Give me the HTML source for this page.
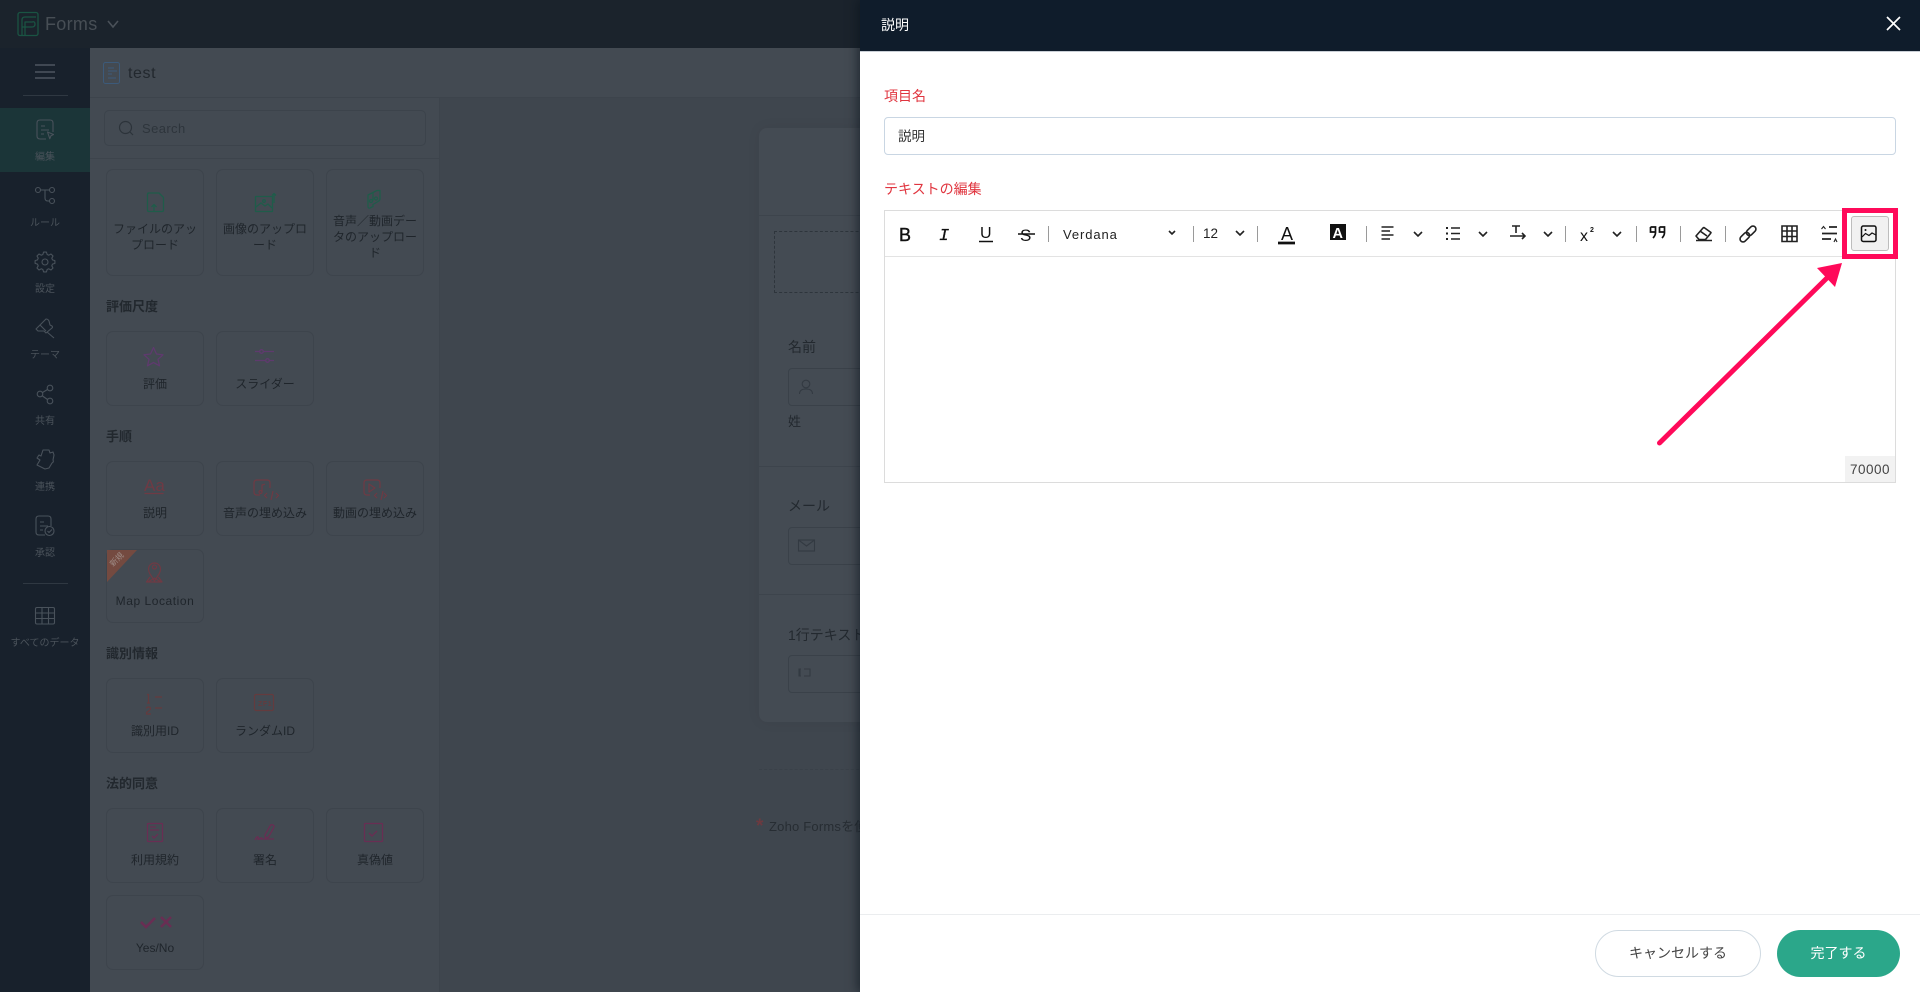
<!DOCTYPE html>
<html lang="ja"><head><meta charset="utf-8"><title>Zoho Forms</title>
<style>
*{box-sizing:border-box}
html,body{margin:0;padding:0;width:1920px;height:992px;overflow:hidden;background:#3f464e;font-family:"Liberation Sans","Noto Sans CJK JP",sans-serif}
.a{position:absolute}
.c{position:absolute;border:1px solid #3d444c;border-radius:7px;width:98px;background:#434a52}
.l{position:absolute;width:98px;text-align:center;font-size:12px;line-height:16px;color:#1f252b;white-space:nowrap}
.s{position:absolute;left:106px;font-size:13px;font-weight:700;color:#22282e;line-height:18px}
.n{position:absolute;left:0;width:90px;text-align:center;font-size:10px;line-height:14px;color:#4b535b;white-space:nowrap}
.f{position:absolute;font-size:14px;color:#23292f;line-height:18px;white-space:nowrap}
.b{position:absolute;border:1px solid #3a4149;border-radius:4px;height:38px;width:120px}
.sep{position:absolute;top:226px;width:1px;height:16px;background:#9a9a9a}
</style></head><body>

<!-- background app -->
<div class="a" style="left:0;top:0;width:860px;height:48px;background:#1b232c"></div>
<div class="a" style="left:0;top:48px;width:90px;height:944px;background:#18212c"></div>
<div class="a" style="left:0;top:108px;width:90px;height:64px;background:#1b3538"></div>
<div class="a" style="left:90px;top:48px;width:770px;height:50px;background:#434a52;border-bottom:1px solid #3d444c"></div>
<div class="a" style="left:90px;top:98px;width:350px;height:894px;background:#434a52;border-right:1px solid #3d444c"></div>
<div class="a" style="left:90px;top:98px;width:350px;height:61px;border-bottom:1px solid #3d444c"></div>
<div class="a" style="left:104px;top:110px;width:322px;height:36px;border:1px solid #3c434b;border-radius:5px"></div>
<div class="a" style="left:142px;top:120px;font-size:13px;line-height:18px;color:#2e353c;letter-spacing:.4px">Search</div>
<div class="a" style="left:45px;top:12px;font-size:18px;line-height:24px;color:#474e55;letter-spacing:.3px">Forms</div>
<div class="a" style="left:128px;top:63px;font-size:16px;line-height:22px;color:#22282e;letter-spacing:.6px">test</div>

<!-- sidebar labels -->
<div class="n" style="top:151px">編集</div>
<div class="n" style="top:217px">ルール</div>
<div class="n" style="top:283px">設定</div>
<div class="n" style="top:349px">テーマ</div>
<div class="n" style="top:415px">共有</div>
<div class="n" style="top:481px">連携</div>
<div class="n" style="top:547px">承認</div>
<div class="n" style="top:637px">すべてのデータ</div>
<div class="a" style="left:23px;top:95px;width:45px;height:1px;background:#2f3842"></div>
<div class="a" style="left:23px;top:583px;width:45px;height:1px;background:#2f3842"></div>

<!-- field cards -->
<div class="c" style="left:106px;top:169px;height:107px"></div>
<div class="c" style="left:216px;top:169px;height:107px"></div>
<div class="c" style="left:326px;top:169px;height:107px"></div>
<div class="l" style="left:106px;top:221px">ファイルのアッ<br>プロード</div>
<div class="l" style="left:216px;top:221px">画像のアップロ<br>ード</div>
<div class="l" style="left:326px;top:213px">音声／動画デー<br>タのアップロー<br>ド</div>
<div class="s" style="top:298px">評価尺度</div>
<div class="c" style="left:106px;top:331px;height:75px"></div>
<div class="c" style="left:216px;top:331px;height:75px"></div>
<div class="l" style="left:106px;top:376px">評価</div>
<div class="l" style="left:216px;top:376px">スライダー</div>
<div class="s" style="top:428px">手順</div>
<div class="c" style="left:106px;top:461px;height:75px"></div>
<div class="c" style="left:216px;top:461px;height:75px"></div>
<div class="c" style="left:326px;top:461px;height:75px"></div>
<div class="l" style="left:106px;top:505px">説明</div>
<div class="l" style="left:216px;top:505px">音声の埋め込み</div>
<div class="l" style="left:326px;top:505px">動画の埋め込み</div>
<div class="c" style="left:106px;top:549px;height:74px"></div>
<div class="l" style="left:106px;top:593px;letter-spacing:.55px">Map Location</div>
<div class="s" style="top:645px">識別情報</div>
<div class="c" style="left:106px;top:678px;height:75px"></div>
<div class="c" style="left:216px;top:678px;height:75px"></div>
<div class="l" style="left:106px;top:723px">識別用ID</div>
<div class="l" style="left:216px;top:723px">ランダムID</div>
<div class="s" style="top:775px">法的同意</div>
<div class="c" style="left:106px;top:808px;height:75px"></div>
<div class="c" style="left:216px;top:808px;height:75px"></div>
<div class="c" style="left:326px;top:808px;height:75px"></div>
<div class="l" style="left:106px;top:852px">利用規約</div>
<div class="l" style="left:216px;top:852px">署名</div>
<div class="l" style="left:326px;top:852px">真偽値</div>
<div class="c" style="left:106px;top:895px;height:75px"></div>
<div class="l" style="left:106px;top:940px">Yes/No</div>

<!-- form preview -->
<div class="a" style="left:759px;top:128px;width:140px;height:594px;background:#444b53;border-radius:8px;box-shadow:0 0 14px rgba(0,0,0,.06)"></div>
<div class="a" style="left:759px;top:215px;width:110px;height:1px;background:#3d444c"></div>
<div class="a" style="left:774px;top:231px;width:110px;height:62px;border:1px dashed #2e353c"></div>
<div class="f" style="left:788px;top:338px;font-size:14px">名前</div>
<div class="b" style="left:788px;top:368px"></div>
<div class="f" style="left:788px;top:413px;font-size:13px">姓</div>
<div class="a" style="left:759px;top:466px;width:110px;height:1px;background:#3d444c"></div>
<div class="f" style="left:788px;top:497px">メール</div>
<div class="b" style="left:788px;top:527px"></div>
<div class="a" style="left:759px;top:594px;width:110px;height:1px;background:#3d444c"></div>
<div class="f" style="left:788px;top:626px">1行テキスト</div>
<div class="b" style="left:788px;top:655px"></div>
<div class="a" style="left:759px;top:769px;width:110px;border-top:1px dashed #3a4149"></div>
<div class="a" style="left:756px;top:817px;font-size:19px;font-weight:700;line-height:20px;color:#6c3a40">*</div>
<div class="f" style="left:769px;top:818px;font-size:13px;letter-spacing:.2px;color:#272d33">Zoho Formsを使</div>

<!-- background icons -->
<svg class="a" style="left:0;top:0" width="860" height="992" viewBox="0 0 860 992" fill="none">
<!-- logo -->
<g stroke="#1a5443" stroke-width="1.300" stroke-linejoin="round"><rect x="18" y="12.500" width="20" height="23" rx="2"/><path d="M22 35V20q0-3 3-3h11M22 27h10q3 0 3-3t-3-2h-7v13"/></g>
<path d="M108 21l5 6 5-6" stroke="#4a5159" stroke-width="1.600"/>
<!-- hamburger -->
<path d="M35 65h20M35 72h20M35 78h20" stroke="#4d5660" stroke-width="1.600"/>
<g stroke="#49525b" stroke-width="1.100" stroke-linejoin="round">
<!-- edit -->
<path d="M46 139h-6q-3-.2-3-3v-13q0-3 3-3h10q3 0 3 3v9M41 126h4M41 130h8M41 134h3"/><path d="M47.500 132l6 2.500-2.500 1.200-1.200 3z"/>
<!-- rules -->
<circle cx="38" cy="190" r="2.500"/><circle cx="52" cy="190" r="2.500"/><circle cx="52" cy="201" r="2.500"/><path d="M40.500 190h9M45 190v8q0 3 3 3h1.500"/>
<!-- settings -->
<circle cx="45" cy="262" r="3"/>
<path d="M42.850 254.500L43.600 252.100L46.400 252.100L47.150 254.500L48.800 255.200L51 254L53 256L51.800 258.200L52.500 259.850L54.900 260.600L54.900 263.400L52.500 264.150L51.800 265.800L53 268L51 270L48.800 268.800L47.150 269.500L46.400 271.900L43.600 271.900L42.850 269.500L41.200 268.800L39 270L37 268L38.200 265.800L37.500 264.150L35.100 263.400L35.100 260.600L37.500 259.850L38.200 258.200L37 256L39 254L41.200 255.200Z"/>
<!-- theme -->
<path d="M36 329l10-10q2 0 3 2l1 4 2 1q1 1 0 2l-6 5-2-2-6 0zM40 325l6 6M47 332l7 6"/>
<!-- share -->
<circle cx="40" cy="394" r="2.800"/><circle cx="50" cy="388" r="2.800"/><circle cx="50" cy="401" r="2.800"/><path d="M42.500 392.500l5-3M42.500 396l5 3.500"/>
<!-- integrate -->
<path d="M43 450l6 0 1 3 3-1 1 3-1 5q1 2-1 3l-3 5-4 1-8-4 3-5-3-2 2-3 2 1 1-3z"/>
<!-- approve -->
<path d="M45 535h-6q-3 0-3-3v-13q0-3 3-3h9q3 0 3 3v7M40 522h4M40 526h8M40 530h3"/><circle cx="49.500" cy="531" r="4.500"/><path d="M47.500 531l1.500 1.500 3-3"/>
<!-- all data -->
<rect x="35.500" y="607.500" width="19" height="16.500" rx="1.500"/><path d="M35.500 613h19M35.500 618.500h19M42 607.500v16.500M48.500 607.500v16.500"/>
</g>
<!-- header doc -->
<g stroke="#3c5a7a" stroke-width="1"><rect x="103.500" y="62.500" width="16" height="21" rx="2"/><path d="M108 68h6M108 71h9M108 74h4M108 78h8"/></g>
<!-- search -->
<circle cx="125.500" cy="127.500" r="6" stroke="#2c333a" stroke-width="1.200"/><path d="M130 132l3 3" stroke="#2c333a" stroke-width="1.200"/>
<!-- green -->
<g stroke="#1f5c4a" stroke-width="1.300" stroke-linejoin="round">
<path d="M148 193h11l1.500 1.500 3 3v12.500q0 1.500-1.500 1.500h-13q-1.500 0-1.500-1.500v-15.500q0-1.500 1.500-1.500z"/><path d="M154 211v-6M151.500 207l2.500-2.500 2.500 2.500"/>
<rect x="255.500" y="196.500" width="17" height="15"/><path d="M256 207l5-4 4 3 3-2 4 4"/><circle cx="264" cy="201" r="1.300"/><path d="M274 203v-9M272 195.500l2-2 2 2"/>
<path d="M368 203v-8l5-2.500 4-2 3 0v8q0 2-2 3l-5 3v2l-3 1.500q-2 .5-2-1.500zM373 192.500v8"/><circle cx="376" cy="198.500" r="1.500"/><circle cx="371" cy="201" r="1.500"/>
</g>
<!-- purple -->
<g stroke="#5f3a6e" stroke-width="1.300" stroke-linejoin="round">
<path d="M153.500 347.500l3 6.500 6.500.8-5 4.500 1.500 6.500-6-3.300-6 3.300 1.500-6.500-5-4.500 6.500-.8z"/>
<path d="M255 351.500h19M255 360.500h19"/><circle cx="261.500" cy="351.500" r="1.800" fill="#434a52"/><circle cx="267.500" cy="360.500" r="1.800" fill="#434a52"/>
</g>
<!-- red -->
<text x="144" y="491" font-size="17" fill="#6f3a44" font-family="Liberation Sans,sans-serif">Aa</text>
<g stroke="#6f3a44" stroke-width="1.200" stroke-linejoin="round">
<path d="M144.500 493.500h19"/>
<path d="M260 495h-3q-3 0-3-3v-9q0-3 3-3h10q3 0 3 3v5"/><path d="M262 492v-7l3-.8"/><circle cx="260.500" cy="492" r="1.500"/><path d="M267 493l-2.500 2.500 2.500 2.500M276 493l2.500 2.500-2.500 2.500M273 491l-2 9"/>
<path d="M370 495h-3q-3 0-3-3v-9q0-3 3-3h10q3 0 3 3v5"/><path d="M369 484l6 4-6 4z"/><path d="M377 493l-2.500 2.500 2.500 2.500M384 493l2.500 2.500-2.500 2.500M383 491l-2 9"/>
<circle cx="154.500" cy="567" r="2"/><path d="M154.500 581l-4.500-7q-1.500-2.500-1.500-5a6 6 0 0 1 12 0q0 2.500-1.500 5z"/><path d="M150 577l-3.500 5h15.500l-3.500-5M148 582l6.500-4 6.500 4"/>
</g>
<!-- new ribbon -->
<path d="M107 550h30l-30 32z" fill="#744a40"/>
<text x="0" y="0" transform="translate(113 567) rotate(-45)" font-size="8" fill="#9d8a84" font-family="Liberation Sans,Noto Sans CJK JP,sans-serif">新規</text>
<!-- ids -->
<g stroke="#643b3e" stroke-width="1.200">
<path d="M147 694.500h1.500v8.500M147 703h3M146.500 708.500q0-1.500 2-1.500t2 1.500-4 4v1.500h4.500M155 697h7M155 708h7"/>
<rect x="254.500" y="694.500" width="19" height="16" rx="1.500"/>
</g>
<text x="258" y="706" font-size="7" font-weight="700" letter-spacing=".6" fill="#643b3e" font-family="Liberation Sans,sans-serif">ZF1</text>
<!-- pink -->
<g stroke="#692e53" stroke-width="1.300" stroke-linejoin="round">
<rect x="147.500" y="823.500" width="15" height="18" rx="1"/><path d="M150 827h6M150 830h9M152 836l2 2 4-4"/>
<path d="M265 835l5-9q1-2 3-1t.5 3l-5 9-3 1zM255 840q2-4 3-3t0 2 2-.5 1 .5h13"/>
<rect x="364.500" y="823.500" width="18" height="18" rx="1"/><path d="M369 833l3 3 5-5"/>
</g>
<path d="M141 922l5 5 9-9" stroke="#692e53" stroke-width="2.600"/>
<path d="M161 917l10 10M171 917l-10 10" stroke="#692e53" stroke-width="2.600"/>
<!-- form icons -->
<g stroke="#333a42" stroke-width="1.100">
<circle cx="806" cy="384" r="3.800"/><path d="M799.500 394q0-5 6.500-5t6.500 5"/>
<rect x="798.500" y="540" width="16" height="11"/><path d="M798.500 540l8 6 8-6"/>
<path d="M801 669h-2v7h2M800 669v7M804 669h6v7h-6"/>
</g>
</svg>

<!-- right panel -->
<div class="a" style="left:860px;top:0;width:1060px;height:992px;background:#fff;box-shadow:-3px 0 9px rgba(10,18,28,.55)"></div>
<div class="a" style="left:860px;top:0;width:1060px;height:52px;background:#0f1c2b;border-bottom:1px solid #c9cfd6"></div>
<div class="a" style="left:881px;top:15px;font-size:14px;line-height:20px;color:#fff">説明</div>
<div class="a" style="left:884px;top:87px;font-size:14px;line-height:18px;color:#e0353f">項目名</div>
<div class="a" style="left:884px;top:117px;width:1012px;height:38px;border:1px solid #c9d6e3;border-radius:4px"></div>
<div class="a" style="left:898px;top:127px;font-size:13.500px;line-height:20px;color:#333">説明</div>
<div class="a" style="left:884px;top:180px;font-size:14px;line-height:18px;color:#e0353f">テキストの編集</div>
<div class="a" style="left:884px;top:210px;width:1012px;height:273px;border:1px solid #dcdcdc"></div>
<div class="a" style="left:885px;top:256px;width:1010px;height:1px;background:#e3e3e3"></div>
<div class="a" style="left:1845px;top:456px;width:50px;height:26px;background:#f2f2f2;font-size:13.500px;line-height:27px;text-align:center;color:#444;letter-spacing:.5px">70000</div>

<div class="sep" style="left:1048px"></div><div class="sep" style="left:1193px"></div><div class="sep" style="left:1257px"></div>
<div class="sep" style="left:1366px"></div><div class="sep" style="left:1565px"></div><div class="sep" style="left:1636px"></div>
<div class="sep" style="left:1680px"></div><div class="sep" style="left:1725px"></div>
<div class="a" style="left:1063px;top:226px;font-size:13px;line-height:18px;color:#222;letter-spacing:.9px">Verdana</div>
<div class="a" style="left:1203px;top:225px;font-size:13.500px;line-height:18px;color:#222">12</div>
<div class="a" style="left:1851px;top:216px;width:38px;height:35px;background:#f1f1f1;border:1px solid #bdbdbd;border-radius:3px"></div>

<svg class="a" style="left:860px;top:0" width="1060" height="992" viewBox="860 0 1060 992" fill="none">
<path d="M1887 17l13 13M1900 17l-13 13" stroke="#fff" stroke-width="1.700"/>
<g font-family="Liberation Sans,sans-serif" fill="#111">
<text x="899" y="241" font-size="18" stroke="#111" stroke-width=".4">B</text>
<text x="939" y="240" font-size="17" font-style="italic" font-family="Liberation Mono,monospace" stroke="#111" stroke-width=".3">I</text>
<text x="980" y="238" font-size="16">U</text>
<text x="1020" y="241" font-size="17">S</text>
<text x="1281" y="240" font-size="18">A</text>
<text x="1580" y="241" font-size="16">x</text>
<text x="1590" y="232" font-size="7" font-weight="700">2</text>
</g>
<g stroke="#111">
<path d="M979 241.500h14" stroke-width="1.500"/>
<path d="M1018 234h17" stroke-width="1.500"/>
<path d="M1278 243h17" stroke-width="2.800"/>
</g>
<rect x="1330" y="224" width="16" height="16" fill="#111"/>
<text x="1332.500" y="238" font-size="14.500" font-weight="700" fill="#fff" font-family="Liberation Sans,sans-serif">A</text>
<!-- chevrons -->
<g stroke="#222" stroke-width="1.600">
<path d="M1169 231l3 3 3-3M1236 231l4 4 4-4M1414 232l4 4 4-4M1479 232l4 4 4-4M1544 232l4 4 4-4M1613 232l4 4 4-4"/>
<!-- align -->
<path d="M1381.500 227h12M1381.500 231h8.500M1381.500 235h12M1381.500 239h8.500"/>
<!-- list -->
<path d="M1451 228h9M1451 233.500h9M1451 239h9"/>
<path d="M1446 228h2M1446 233.500h2M1446 239h2" stroke-width="2"/>
<!-- text dir -->
<path d="M1512 226h8M1516 226v7M1510 236h15M1522 233l3 3-3 3"/>
<!-- eraser -->
<path d="M1696 236l7-8 1-.5 7 5-.5 1-5 6h-6.500zM1700 231l7 5M1696 240.500h16" stroke-linejoin="round"/>
<!-- link -->
<g transform="rotate(-45 1748 234)"><rect x="1738" y="231" width="11" height="6" rx="3"/><rect x="1747" y="231" width="11" height="6" rx="3"/></g>
<!-- table -->
<path d="M1782 226h15v15.500h-15zM1782 231h15M1782 236.500h15M1787 226v15.500M1792 226v15.500"/>
<!-- spacing -->
<path d="M1822 233.500h15M1829 227h8M1822 239h9" stroke-width="1.800"/>
<path d="M1821.500 229l2-2.500 2 2.500M1834 242l1.500-3 1.500 3" stroke-width="1.100"/>
</g>
<!-- quote -->
<path d="M1650.500 227h5v5.500q0 3-2.500 5.500M1650.500 227v5h5M1659.500 227h5v5.500q0 3-2.500 5.500M1659.500 227v5h5" stroke="#111" stroke-width="1.700"/>
<!-- image icon -->
<rect x="1861.500" y="226" width="14.500" height="15.500" rx="1.800" stroke="#111" stroke-width="1.500"/>
<circle cx="1865.500" cy="230" r="1" fill="#111"/>
<path d="M1862 237l3.500-3.500 3.500 2 3-2.500 4 2" stroke="#111" stroke-width="1.200"/>
<!-- annotation -->
<rect x="1844.500" y="210.500" width="51" height="46" stroke="#ff0a5a" stroke-width="5"/>
<path d="M1659.500 443L1830 275" stroke="#ff0a5a" stroke-width="5" stroke-linecap="round"/>
<path d="M1817 268L1842 263L1835 287Z" fill="#ff0a5a"/>
</svg>

<!-- footer -->
<div class="a" style="left:860px;top:914px;width:1060px;height:1px;background:#ebedef"></div>
<div class="a" style="left:1595px;top:930px;width:166px;height:47px;border:1px solid #d0dae2;border-radius:24px;text-align:center;font-size:14px;line-height:44px;color:#444">キャンセルする</div>
<div class="a" style="left:1777px;top:930px;width:123px;height:47px;background:#2ba78a;border-radius:24px;text-align:center;font-size:14px;line-height:46px;color:#fff">完了する</div>
</body></html>
